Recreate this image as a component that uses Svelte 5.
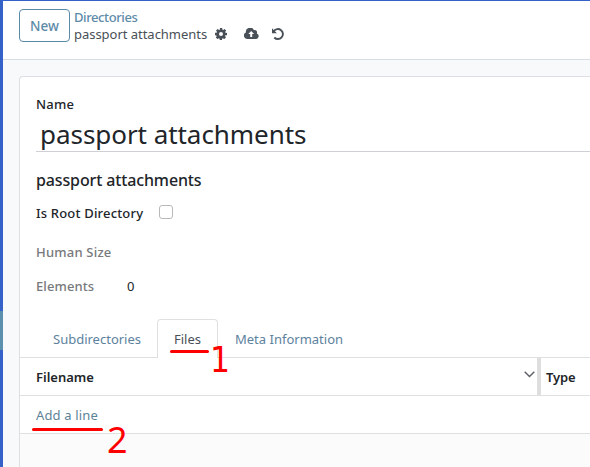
<script>
  const tabs = [
    { label: 'Subdirectories', cls: 'sub' },
    { label: 'Files', cls: 'files', active: true },
    { label: 'Meta Information', cls: 'meta' }
  ];
</script>

<div class="app">
  <header>
    <button class="new">New</button>
    <div class="crumbs">
      <a class="parent">Directories</a>
      <div class="current">
        <span class="title">passport attachments</span>
        <svg class="gear" width="12" height="12" viewBox="0 0 1536 1536"><path fill="currentColor" fill-rule="evenodd" d="M1024 768a256 256 0 1 0-512 0 256 256 0 1 0 512 0zm512-109v222c0 16-12 30-28 33l-185 28c-10 32-23 63-39 92 34 48 71 94 107 138 10 12 10 28 0 40-28 38-180 202-220 202-8 0-16-3-22-8l-138-108c-30 16-61 28-92 38-10 61-14 125-29 185-4 16-17 27-33 27H635c-16 0-30-12-32-29l-28-184c-31-10-61-22-90-37l-141 107c-6 5-14 8-22 8-26 0-216-180-216-202 0-9 3-15 8-23 35-46 72-91 107-138-17-32-31-64-41-97l-183-27C-17 923 0 896 0 877V655c0-16 12-30 28-33l186-28c9-32 22-63 39-92-34-49-72-94-108-139-5-6-8-12-8-20 0-38 183-202 220-202 8 0 16 3 22 9l138 107c30-16 61-28 92-38 10-61 14-125 29-185 4-16 17-27 33-27h222c16 0 30 12 32 29l28 184c31 10 61 22 90 37l142-107c6-6 13-9 21-9 26 0 216 182 216 203 0 8-3 15-8 22-35 46-72 91-106 138 16 32 30 64 40 97l183 28c16 3 28 17 28 33z"/></svg>
        <svg class="cloud" width="15" height="11" viewBox="0 0 15 11"><path fill="currentColor" fill-rule="evenodd" d="M3.4 11A3.4 3.4 0 0 1 1.9 4.5 4.2 4.2 0 0 1 9.9 2.2a2.3 2.3 0 0 1 2.9 3.2A2.9 2.9 0 0 1 12.1 11ZM4.3 6h1.9v2.9h2V6h1.9L7.2 3Z"/></svg>
        <svg class="undo" width="12" height="12" viewBox="0 0 12 12" fill="none" stroke="currentColor"><path stroke-width="1.9" d="M1.8 3.2A5 5 0 1 1 2.3 9.5"/><path fill="currentColor" stroke="none" d="M0 .3V5.2H4.9Z"/></svg>
      </div>
    </div>
  </header>

  <main>
    <section class="sheet">
      <div class="form">
        <label class="name" for="dir-name"><span>Name</span></label>
        <div class="field" id="dir-name"><span>passport attachments</span></div>
        <h2><span>passport attachments</span></h2>
        <div class="row root"><span class="lbl">Is Root Directory</span><i class="check"></i></div>
        <div class="row size"><span class="lbl">Human Size</span></div>
        <div class="row elements"><span class="lbl">Elements</span><span class="zero">0</span></div>
      </div>

      <nav>
        {#each tabs as tab}
          <div class="tab {tab.cls}" class:active={tab.active}>
            <span>{tab.label}</span>
            {#if tab.active}
              <b class="line line-one"></b><b class="mark mark-one">1</b>
            {/if}
          </div>
        {/each}
      </nav>

      <div class="thead">
        <div class="col"><span class="filename">Filename</span>
          <svg width="11" height="7" viewBox="0 0 11 7" fill="none" stroke="#5b5f65" stroke-width="1.4"><path d="M.7 .8 5.5 5.5 10.3 .8"/></svg>
        </div>
        <div class="type"><span>Type</span></div>
      </div>
      <div class="add">
        <span class="add-link">Add a line</span>
        <b class="line line-two"></b><b class="mark mark-two">2</b>
      </div>
      <div class="rest"></div>
    </section>
  </main>
  <i class="thumb"></i>
</div>

<style>
  :global(body) { overflow: hidden; }
  .app {
    position: relative;
    box-sizing: border-box;
    width: 590px;
    height: 467px;
    display: flex;
    flex-direction: column;
    border-left: 3px solid #3462c8;
    border-top: 1px solid #3462c8;
    background: #f8f9fb;
    color: #212529;
    font: 13px/18px "Noto Sans", "Open Sans", sans-serif;
    white-space: nowrap;
  }
  header {
    box-sizing: border-box;
    height: 59px;
    flex: none;
    display: flex;
    background: #fff;
    border-bottom: 1px solid #d9dde2;
    padding: 8px 0 0 16px;
  }
  .new {
    box-sizing: border-box;
    width: 51px;
    height: 33px;
    padding: 0;
    border: 1px solid #5b8aa8;
    border-radius: 4px;
    background: #fff;
    color: #5d8ba8;
    font: 500 13.5px/30px "Noto Sans", sans-serif;
  }
  .crumbs { margin-left: 4px; }
  .parent {
    display: block;
    height: 16px;
    line-height: 17px;
    color: #5d8ba8;
    font-weight: 500;
    letter-spacing: -.4px;
  }
  .current { display: flex; align-items: center; height: 17px; color: #495057; }
  .title { width: 141px; letter-spacing: -.03px; }
  .cloud { margin-left: 17px; }
  .undo { margin-left: 13px; }
  main { flex: 1; padding: 16px 0 0 16px; }
  .sheet {
    box-sizing: border-box;
    height: 391px;
    display: flex;
    flex-direction: column;
    border: solid #dddfe3;
    border-width: 1px 0 0 1px;
    border-top-left-radius: 4px;
    background: #fff;
  }
  .form { height: 242px; flex: none; padding-left: 16px; }
  .name { display: block; padding-top: 18px; height: 19px; font-weight: 500; letter-spacing: .2px; }
  .field {
    box-sizing: border-box;
    height: 38px;
    border-bottom: 1px solid #ced0d6;
    padding-left: 4px;
    font-size: 26px;
    line-height: 41px;
    letter-spacing: -.05px;
  }
  h2 { margin: 16px 0 0; height: 24px; font-size: 16px; line-height: 24px; font-weight: 500; letter-spacing: -.13px; }
  .row { display: flex; height: 18px; }
  .root { margin-top: 12px; font-weight: 500; }
  .root .lbl { width: 123px; letter-spacing: .18px; }
  .check {
    box-sizing: border-box;
    width: 14px;
    height: 14px;
    margin-top: 1px;
    border: 1px solid #b7b9bb;
    border-radius: 3px;
  }
  .size { margin-top: 21px; font-weight: 500; color: #77797c; letter-spacing: .2px; }
  .elements { margin-top: 16px; }
  .elements .lbl { width: 91px; font-weight: 500; color: #77797c; letter-spacing: .1px; }
  nav {
    box-sizing: border-box;
    height: 39px;
    flex: none;
    display: flex;
    padding-left: 16px;
    border-bottom: 1px solid #dee0e2;
  }
  .tab {
    position: relative;
    box-sizing: border-box;
    height: 39px;
    padding: 0 16px;
    border: 1px solid transparent;
    border-bottom: 0;
    line-height: 38px;
    color: #5d829e;
  }
  .tab.sub { width: 121px; }
  .tab.files { width: 61px; }
  .tab.active {
    border-color: #dee0e2;
    border-radius: 4px 4px 0 0;
    background: #fff;
    color: #495057;
  }
  .thead {
    box-sizing: border-box;
    height: 38px;
    flex: none;
    display: flex;
    border-bottom: 1px solid #dee0e2;
    font-weight: 600;
    line-height: 38px;
  }
  .col {
    box-sizing: border-box;
    width: 521px;
    display: flex;
    align-items: center;
    justify-content: space-between;
    padding: 0 2px 0 16px;
    border-right: 4px solid #dedede;
  }
  .col svg { margin-bottom: 4px; }
  .type { padding-left: 5px; }
  .type span { letter-spacing: -.1px; }
  .add {
    position: relative;
    box-sizing: border-box;
    height: 38px;
    flex: none;
    padding-left: 16px;
    border-bottom: 1px solid #dee0e2;
    line-height: 38px;
    color: #5d8398;
  }
  .add-link { letter-spacing: .15px; }
  .rest { flex: 1; background: #fbfbfb; }
  .line { position: absolute; height: 3px; border-radius: 2px; background: #fe0000; }
  .line-one { left: 12px; top: 30px; width: 39px; }
  .line-two { left: 12px; top: 32px; width: 71px; }
  .mark {
    position: absolute;
    z-index: 2;
    color: #fe0000;
    font: 400 35px/40px "DejaVu Sans", sans-serif;
    transform: scaleX(.9);
    transform-origin: left;
  }
  .mark-one { left: 52px; top: 20px; }
  .mark-two { left: 87px; top: 24px; font-family: "Noto Sans", sans-serif; font-size: 36px; transform: none; }
  .thumb { position: absolute; left: -3px; top: 310px; width: 3px; height: 39px; background: #5b8fae; }
</style>
